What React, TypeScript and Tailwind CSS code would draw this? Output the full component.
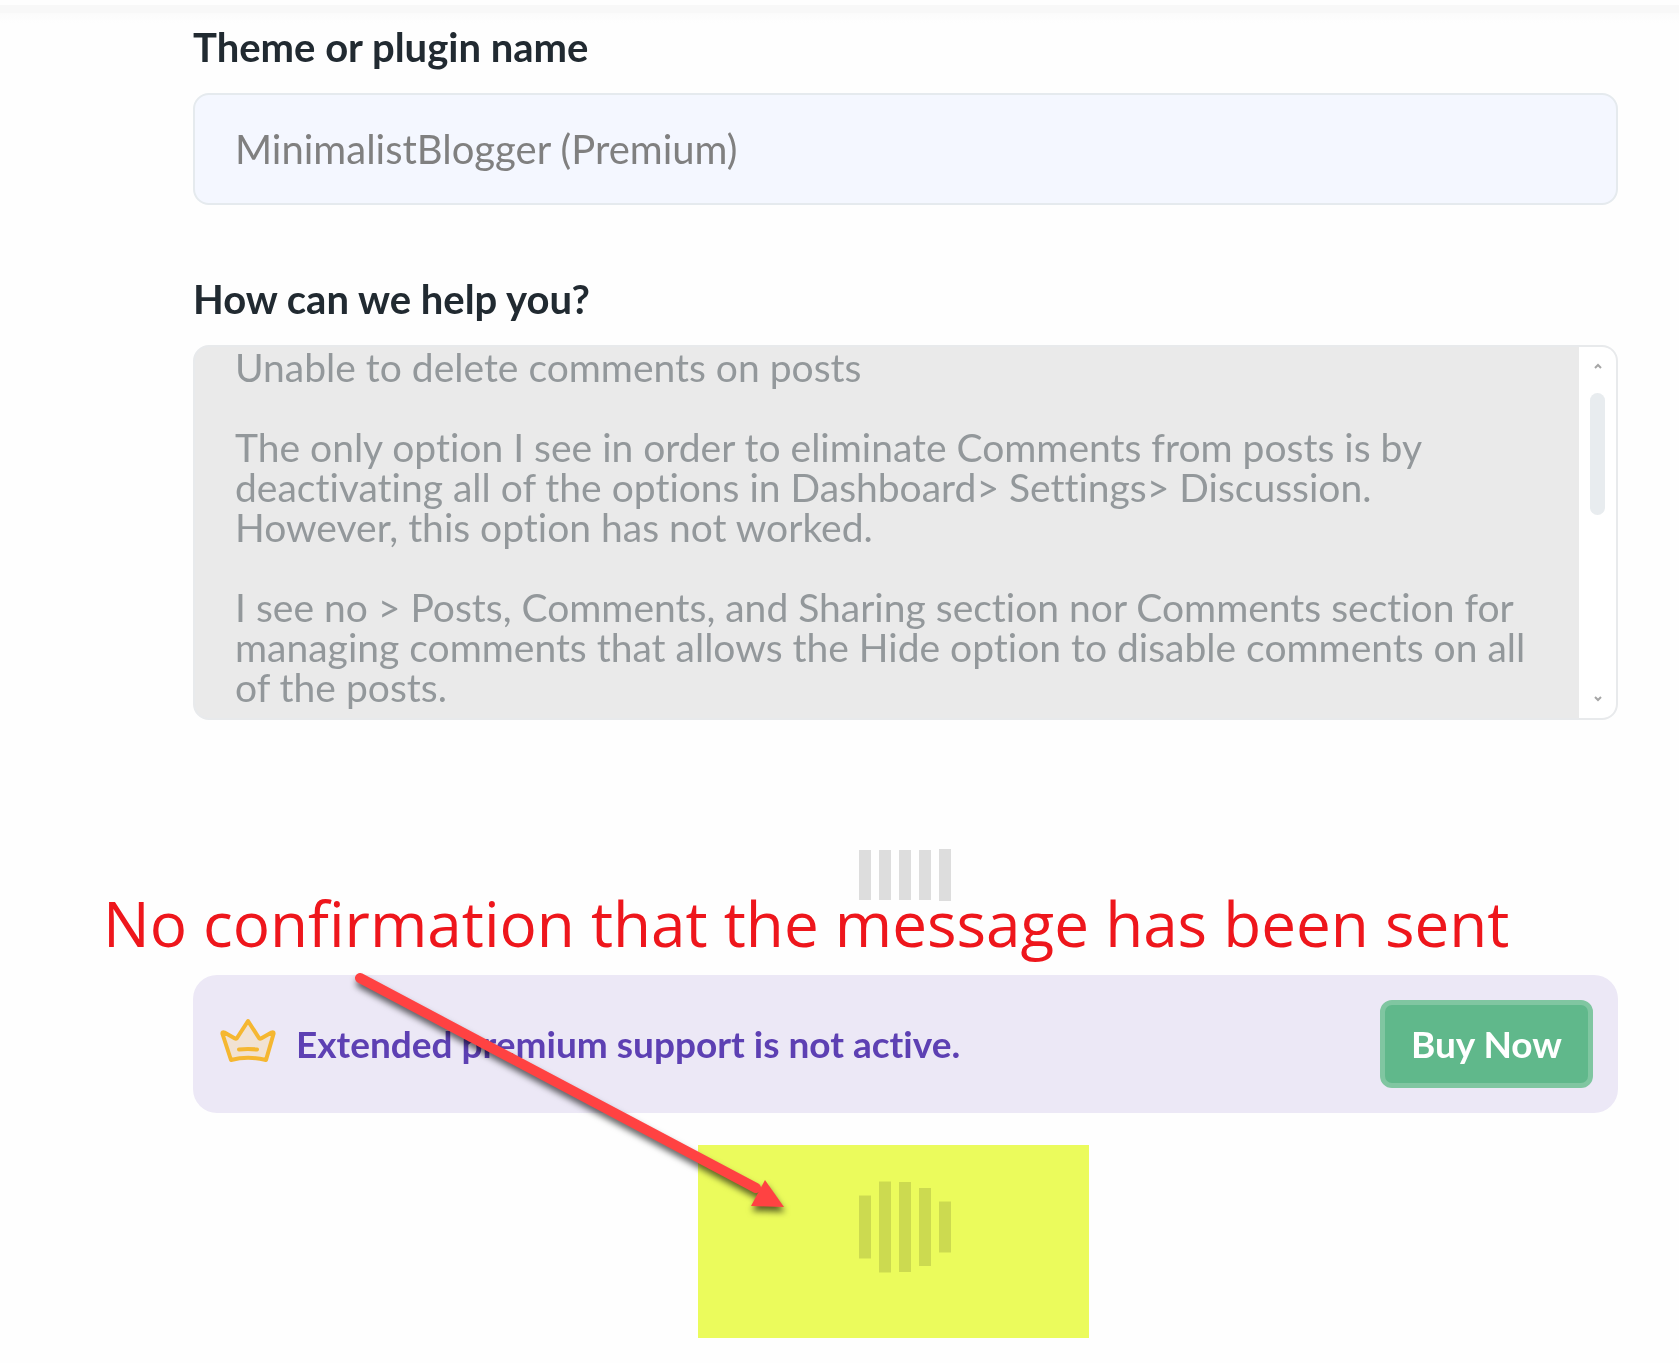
import React from 'react';

const message = `Unable to delete comments on posts

The only option I see in order to eliminate Comments from posts is by deactivating all of the options in Dashboard> Settings> Discussion. However, this option has not worked.

I see no > Posts, Comments, and Sharing section nor Comments section for managing comments that allows the Hide option to disable comments on all of the posts.`;

type LoaderProps = {
  heights: number[];
};

const Loader: React.FC<LoaderProps> = ({ heights }) => (
  <svg className="mx-auto block" width="93" height="92" viewBox="0 0 93 92" role="img" aria-label="Loading">
    {heights.map((height, index) => (
      <rect key={index} x={index * 20} y={46 - height / 2} width="12" height={height} fill="#dddddd" />
    ))}
  </svg>
);

const Crown: React.FC = () => (
  <svg
    className="shrink-0"
    width="60"
    height="52"
    viewBox="-2 0 60 52"
    fill="#f1e2d3"
    stroke="#f5b731"
    strokeWidth="4"
    strokeLinecap="round"
    strokeLinejoin="round"
    aria-hidden="true"
  >
    <path d="M28 3 L39 20 Q40 21 41 20.500 L51.500 14.500 Q54 13.500 53.500 16 L46 42 Q28 37.500 11 42 L2.500 16 Q2 13.500 4.500 14.500 L15 20.500 Q16 21 17 20 Z" />
    <path d="M19 31.500 Q28 30.300 37 31.500" fill="none" />
  </svg>
);

const Scrollbar: React.FC = () => (
  <div className="flex w-[37px] shrink-0 flex-col items-center rounded-r-xl bg-white py-4" aria-hidden="true">
    <svg width="8" height="6" viewBox="0 0 8 6" fill="none" stroke="#a6a6a6" strokeWidth="2">
      <path d="M1 5 L4 2 L7 5" />
    </svg>
    <div className="mt-6 h-[122px] w-[15px] rounded-full bg-[#e8ecef]"></div>
    <svg className="mt-auto" width="8" height="6" viewBox="0 0 8 6" fill="none" stroke="#a6a6a6" strokeWidth="2">
      <path d="M1 1 L4 4 L7 1" />
    </svg>
  </div>
);

const Arrow: React.FC = () => (
  <svg
    className="pointer-events-none absolute top-0 left-[160px] z-10 overflow-visible drop-shadow-[1px_5px_3px_rgba(0,0,0,0.6)]"
    width="440"
    height="240"
    viewBox="0 0 440 240"
    fill="#ff4242"
    aria-hidden="true"
  >
    <path d="M7 3 L403 213" stroke="#ff4242" strokeWidth="10" strokeLinecap="round" />
    <path d="M412 205 L431 232 L398 231 Z" />
  </svg>
);

const App: React.FC = () => {
  return (
    <div className="min-h-screen overflow-x-hidden bg-[#fefefe] pt-[5px] pb-6 font-['Lato',sans-serif] text-[40px] leading-[48px] [font-variant-ligatures:none]">
      <div className="h-2 bg-[#f8f8f8]"></div>
      <div className="h-2.5 bg-linear-to-b from-[#fbfbfb] to-[#fefefe]"></div>

      <main className="pr-[61px] pl-[193px]">
        <label htmlFor="product" className="block font-bold text-[#212a31]">Theme or plugin name</label>
        <input
          id="product"
          type="text"
          readOnly
          value="MinimalistBlogger (Premium)"
          className="mt-[22px] block h-28 w-full rounded-2xl border-2 border-[#e5eaee] bg-[#f4f7ff] px-10 text-[#808080] outline-none"
        />

        <label htmlFor="message" className="mt-[70px] block font-bold text-[#212a31]">How can we help you?</label>
        <div className="mt-[22px] flex overflow-hidden rounded-2xl border-2 border-[#e8eaec] bg-[#eaeaea]">
          <textarea
            id="message"
            readOnly
            value={message}
            className="block h-[371px] min-w-0 flex-1 resize-none overflow-hidden pr-10 pl-10 text-[39px] leading-10 text-[#93989b] outline-none"
          />
          <Scrollbar />
        </div>

        <div className="mt-[109px]">
          <Loader heights={[50, 50, 50, 50, 52]} />
        </div>

        <section className="relative mt-[54px]">
          <p className="absolute bottom-full left-[-90px] pb-3 font-['Open_Sans',sans-serif] text-[62px] leading-[80px] font-medium whitespace-nowrap text-[#ee161c]">
            No confirmation that the message has been sent
          </p>
          <div className="flex items-center rounded-3xl bg-[#ece8f6] p-[25px] text-[37px]">
            <Crown />
            <p className="ml-[18px] flex-1 font-bold text-[#5d40b3]">Extended premium support is not active.</p>
            <button type="button" className="rounded-xl border-[5px] border-[#80c6a1] bg-[#60b88b] px-[26px] py-[15px] font-bold text-white">
              Buy Now
            </button>
          </div>
          <Arrow />
        </section>

        <div className="relative mt-8 py-9">
          <Loader heights={[63, 91, 90, 78, 51]} />
          <div className="absolute inset-x-0 top-0 mx-auto h-[193px] w-[391px] -translate-x-3 bg-[#ecfc5c] mix-blend-multiply"></div>
        </div>
      </main>
    </div>
  );
};

export default App;
